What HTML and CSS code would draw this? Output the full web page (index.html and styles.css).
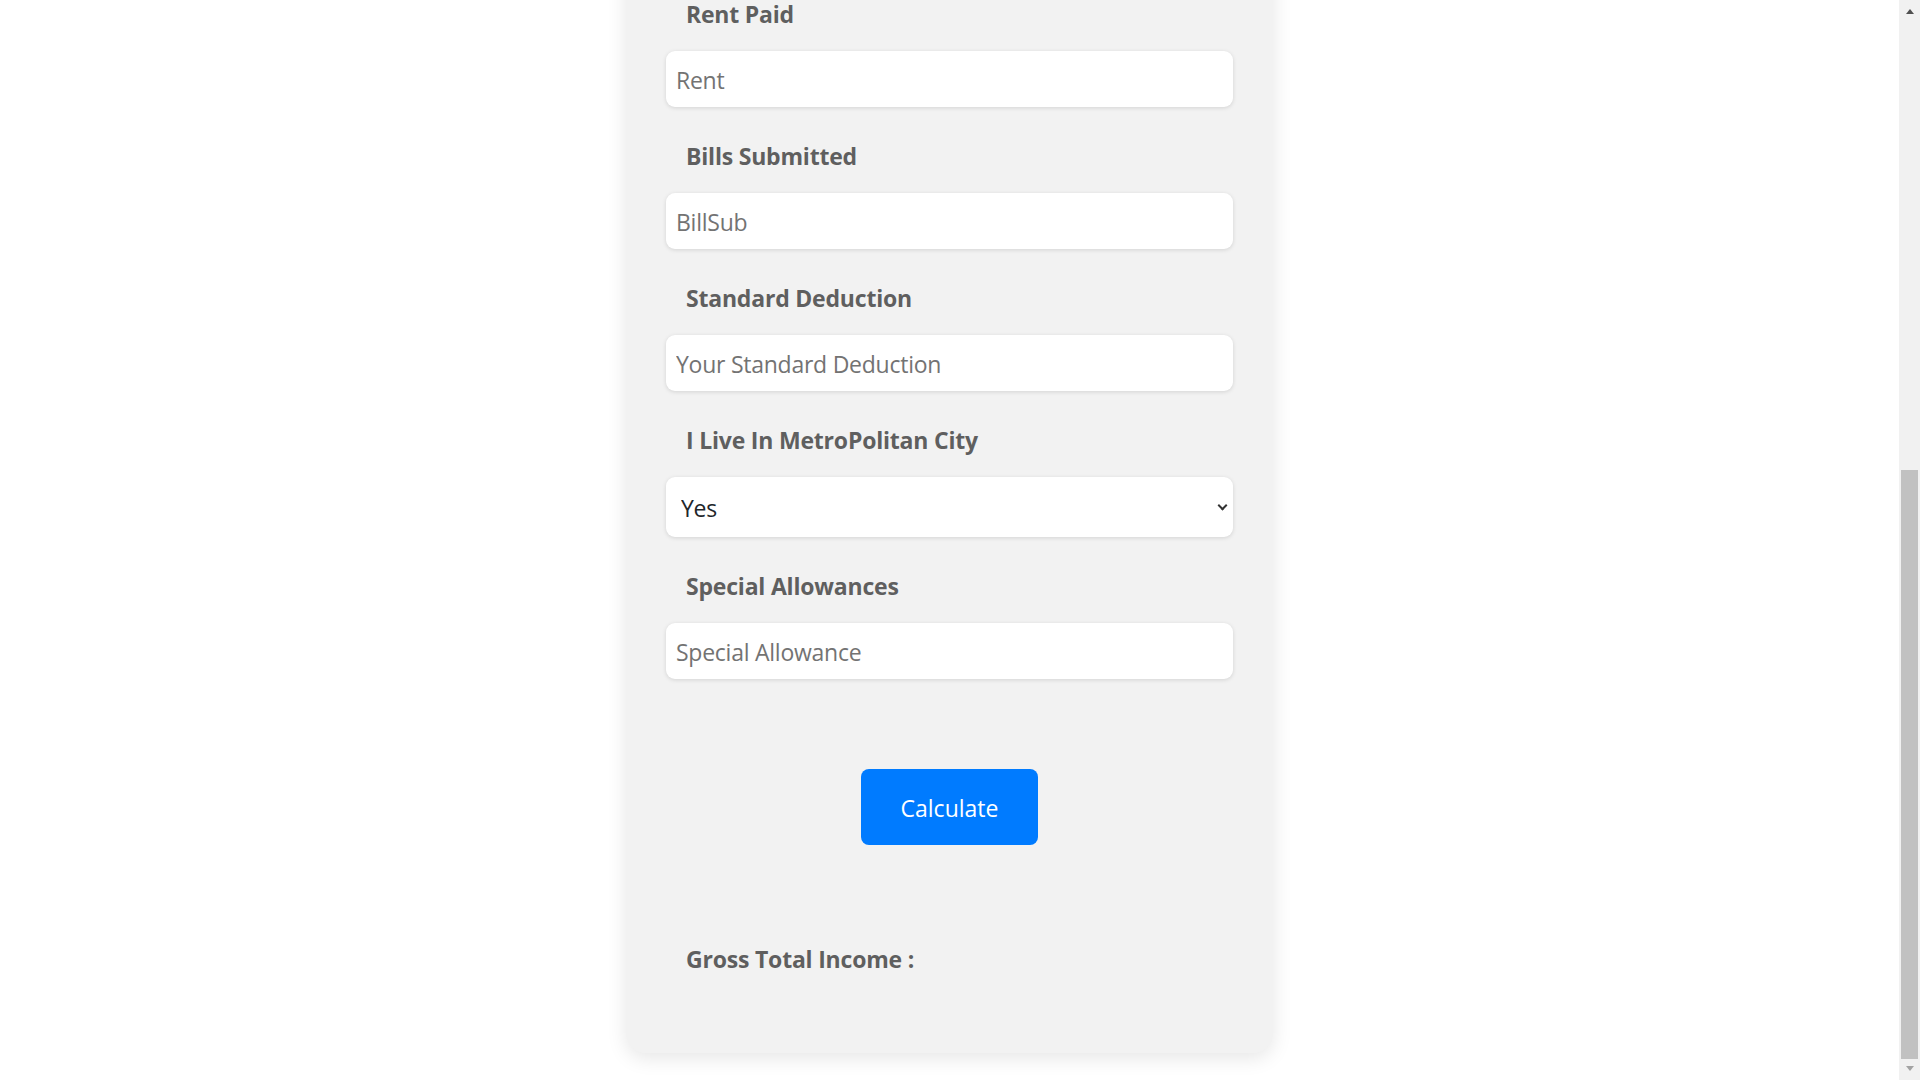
FILE: index.html
```html
<!DOCTYPE html>
<html lang="en">
<head>
<meta charset="utf-8">
<title>Tax Calculator</title>
<link rel="stylesheet" href="styles.css">
</head>
<body>
<main class="page">
  <form class="card card--scrolled" onsubmit="return false;">
    <div class="field">
      <label class="field-label" for="rent">Rent Paid</label>
      <input class="field-input" id="rent" type="text" placeholder="Rent">
    </div>
    <div class="field">
      <label class="field-label" for="billsub">Bills Submitted</label>
      <input class="field-input" id="billsub" type="text" placeholder="BillSub">
    </div>
    <div class="field">
      <label class="field-label" for="stdded">Standard Deduction</label>
      <input class="field-input" id="stdded" type="text" placeholder="Your Standard Deduction">
    </div>
    <div class="field">
      <label class="field-label" for="metro">I Live In MetroPolitan City</label>
      <div class="select-wrap">
        <select class="field-select" id="metro">
          <option>Yes</option>
          <option>No</option>
        </select>
      </div>
    </div>
    <div class="field">
      <label class="field-label" for="special">Special Allowances</label>
      <input class="field-input" id="special" type="text" placeholder="Special Allowance">
    </div>
    <div class="actions">
      <button class="btn-calc" type="submit">Calculate</button>
    </div>
    <p class="result">Gross Total Income :</p>
  </form>
</main>
<div class="scrollbar" aria-hidden="true">
  <div class="scrollbar-btn scrollbar-btn--up"><span class="arrow-up"></span></div>
  <div class="scrollbar-track" id="track"><div class="scrollbar-thumb" id="thumb"></div></div>
  <div class="scrollbar-btn scrollbar-btn--down"><span class="arrow-down"></span></div>
</div>
<script src="script.js"></script>
</body>
</html>
```

FILE: styles.css
```css
html {
  background: #ffffff;
}

body {
  margin: 0;
  font-family: "Open Sans", "Liberation Sans", sans-serif;
  color: #5f5f5f;
}

.page {
  display: flex;
  justify-content: center;
  padding: 27px 21px 27px 0;
}

.card {
  box-sizing: border-box;
  display: flex;
  flex-direction: column;
  width: 647px;
  margin: 0;
  padding: 40px 40px 76px;
  background: #f2f2f2;
  border-radius: 20px;
  box-shadow: 0 5px 20px rgba(0, 0, 0, 0.1);
}

.card--scrolled {
  padding-top: 791px;
}

.field {
  display: flex;
  flex-direction: column;
  margin-bottom: 30px;
}

.field-label {
  margin: 0 0 19px 20px;
  padding-top: 1px;
  font-size: 23px;
  line-height: 36px;
  font-weight: 700;
  letter-spacing: -0.2px;
  color: #5f5f5f;
}

.field-input,
.field-select {
  box-sizing: border-box;
  width: 100%;
  border: none;
  outline: none;
  border-radius: 9px;
  background: #ffffff;
  box-shadow: 0 1px 4px rgba(0, 0, 0, 0.13);
  font-family: "Open Sans", "Liberation Sans", sans-serif;
  font-size: 23px;
  letter-spacing: -0.25px;
}

.field-input {
  height: 56px;
  padding: 2px 10px 0;
  color: #212529;
}

.field-input::placeholder {
  color: #737373;
  opacity: 1;
}

.select-wrap {
  position: relative;
}

.field-select {
  display: block;
  height: 60px;
  padding: 2px 40px 0 15px;
  color: #212529;
  appearance: none;
  -webkit-appearance: none;
}

.select-wrap::after {
  content: "";
  position: absolute;
  top: 25px;
  right: 7.5px;
  box-sizing: border-box;
  width: 7px;
  height: 7px;
  border-right: 2px solid #333333;
  border-bottom: 2px solid #333333;
  transform: rotate(45deg);
  pointer-events: none;
}

.actions {
  display: flex;
  justify-content: center;
  margin-top: 60px;
}

.btn-calc {
  width: 177px;
  height: 76px;
  padding: 2px 0 0;
  border: none;
  border-radius: 8px;
  background: #007bff;
  color: #ffffff;
  font-family: "Open Sans", "Liberation Sans", sans-serif;
  font-size: 23px;
  cursor: pointer;
}

.result {
  margin: 96px 0 0 20px;
  padding-top: 1px;
  font-size: 23px;
  line-height: 35px;
  font-weight: 700;
  letter-spacing: -0.2px;
  color: #5f5f5f;
}

/* window scrollbar */
.scrollbar {
  position: fixed;
  top: 0;
  right: 0;
  display: flex;
  flex-direction: column;
  width: 21px;
  height: 100vh;
  background: #f1f1f1;
}

.scrollbar-btn {
  display: flex;
  justify-content: center;
  flex: 0 0 21px;
  box-sizing: border-box;
}

.scrollbar-btn--up {
  padding-top: 9px;
}

.scrollbar-btn--down {
  padding-top: 7px;
}

.arrow-up {
  width: 0;
  height: 0;
  border-left: 4.5px solid transparent;
  border-right: 4.5px solid transparent;
  border-bottom: 5px solid #505050;
}

.arrow-down {
  width: 0;
  height: 0;
  border-left: 4.5px solid transparent;
  border-right: 4.5px solid transparent;
  border-top: 5px solid #a3a3a3;
}

.scrollbar-track {
  flex: 1 1 auto;
  padding: 0 2px;
  overflow: hidden;
}

.scrollbar-thumb {
  height: 589px;
  margin-top: 449px;
  background: #c1c1c1;
}
```

FILE: script.js
```js
function syncScrollbar() {
  var doc = document.documentElement;
  var track = document.getElementById('track');
  var thumb = document.getElementById('thumb');
  var trackH = track.clientHeight;
  var ratio = window.innerHeight / doc.scrollHeight;
  var thumbH = Math.round(trackH * Math.min(ratio, 1));
  var maxScroll = doc.scrollHeight - window.innerHeight;
  var pos = maxScroll > 0 ? window.scrollY / maxScroll : 0;
  thumb.style.height = thumbH + 'px';
  thumb.style.marginTop = Math.round((trackH - thumbH) * pos) + 'px';
}
function scrollToEnd() {
  window.scrollTo(0, document.documentElement.scrollHeight);
  syncScrollbar();
}
scrollToEnd();
window.addEventListener('load', scrollToEnd);
window.addEventListener('scroll', syncScrollbar);
```
